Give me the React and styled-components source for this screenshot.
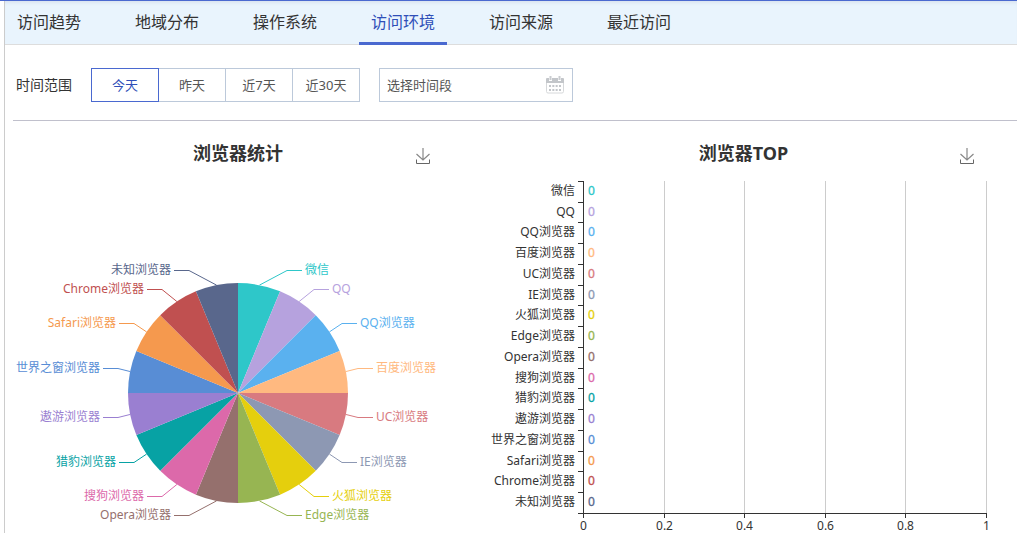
import React, { useState } from "react";
import styled, { createGlobalStyle } from "styled-components";

const GlobalStyle = createGlobalStyle`
  * {
    box-sizing: border-box;
  }
  body {
    margin: 0;
    background: #fff;
    color: #333;
    font-family: "Noto Sans", "Noto Sans CJK SC", sans-serif;
  }
  button, input {
    font-family: inherit;
  }
`;

const Page = styled.div`
  min-height: 100vh;
  padding-left: 4px;
  border-top: 1px solid #4a69d0;
  display: flex;
`;

const Content = styled.main`
  flex: 1;
  min-width: 0;
  border-left: 1px solid #ccc;
`;

const TabBar = styled.nav`
  display: flex;
  gap: 30px;
  height: 44px;
  background: #e9f4fd;
  border-bottom: 1px solid #ddd;
  box-shadow: inset 0 4px 4px -3px #d3dcea;
`;

const Tab = styled.a`
  height: 44px;
  padding: 0 12px;
  font-size: 16px;
  line-height: 42px;
  white-space: nowrap;
  text-decoration: none;
  color: ${(props) => (props.$active ? "#2f4fb8" : "#333")};
  border-bottom: 3px solid ${(props) => (props.$active ? "#4a69d0" : "transparent")};
`;

const Body = styled.div`
  padding-left: 8px;
`;

const Filters = styled.div`
  display: flex;
  align-items: center;
  height: 76px;
  padding: 4px 0 0 3px;
  border-bottom: 1px solid #c0c0cc;
`;

const FilterLabel = styled.span`
  width: 75px;
  padding-bottom: 2px;
  font-size: 14px;
`;

const RangeGroup = styled.div`
  display: flex;
  margin-right: 19px;
`;

const RangeButton = styled.button`
  position: relative;
  z-index: ${(props) => (props.$active ? 1 : 0)};
  width: 68px;
  height: 34px;
  padding: 0;
  font-size: 13px;
  background: #fff;
  color: ${(props) => (props.$active ? "#2f4fb8" : "#555")};
  border: 1px solid ${(props) => (props.$active ? "#4a69d0" : "#bcc9da")};
  cursor: pointer;

  & + & {
    margin-left: -1px;
  }
`;

const DateBox = styled.label`
  display: flex;
  align-items: center;
  width: 194px;
  height: 34px;
  padding: 0 8px 0 7px;
  border: 1px solid #bcc9da;
`;

const DateInput = styled.input`
  flex: 1;
  min-width: 0;
  padding: 0;
  border: 0;
  outline: 0;
  font-size: 13px;
  background: transparent;

  &::placeholder {
    color: #555;
    opacity: 1;
  }
`;

const Charts = styled.div`
  display: grid;
  grid-template-columns: 450fr 554fr;
`;

const Panel = styled.section`
  min-width: 0;
  padding: ${(props) => (props.$wide ? "0 7px 0 14px" : "0")};
`;

const PanelHead = styled.header`
  display: grid;
  grid-template-columns: 1fr auto 1fr;
  align-items: center;
  height: 54px;
  padding: 10px 0 0;
`;

const PanelTitle = styled.h2`
  grid-column: 2;
  margin: 0;
  font-size: 18px;
  line-height: 24px;
  font-weight: bold;
`;

const SaveButton = styled.button`
  justify-self: end;
  display: flex;
  margin: 6px ${(props) => (props.$wide ? "35px" : "32px")} 0 0;
  padding: 0;
  border: 0;
  background: none;
  cursor: pointer;
`;

const Chart = styled.svg`
  display: block;
  width: 100%;
  font-size: 12px;
`;

const tabs = ["访问趋势", "地域分布", "操作系统", "访问环境", "访问来源", "最近访问"];
const ranges = ["今天", "昨天", "近7天", "近30天"];

const browsers = [
  { name: "微信", color: "#2ec7c9" },
  { name: "QQ", color: "#b6a2de" },
  { name: "QQ浏览器", color: "#5ab1ef" },
  { name: "百度浏览器", color: "#ffb980" },
  { name: "UC浏览器", color: "#d87a80" },
  { name: "IE浏览器", color: "#8d98b3" },
  { name: "火狐浏览器", color: "#e5cf0d" },
  { name: "Edge浏览器", color: "#97b552" },
  { name: "Opera浏览器", color: "#95706d" },
  { name: "搜狗浏览器", color: "#dc69aa" },
  { name: "猎豹浏览器", color: "#07a2a4" },
  { name: "遨游浏览器", color: "#9a7fd1" },
  { name: "世界之窗浏览器", color: "#588dd5" },
  { name: "Safari浏览器", color: "#f5994e" },
  { name: "Chrome浏览器", color: "#c05050" },
  { name: "未知浏览器", color: "#59678c" },
];

// distance of each label elbow from the pie centre, one quarter of the circle
const elbows = [
  [49, 123],
  [76, 104],
  [104, 70],
  [120, 25],
];

const CX = 225;
const CY = 218;
const R = 110;

const point = (turn) => {
  const a = turn * Math.PI * 2;
  return [CX + R * Math.sin(a), CY - R * Math.cos(a)];
};

function PieChart() {
  const n = browsers.length;
  return (
    <Chart viewBox="0 0 450 358" role="img" aria-label="浏览器统计">
      {browsers.map((b, i) => {
        const [x1, y1] = point(i / n);
        const [x2, y2] = point((i + 1) / n);
        const [mx, my] = point((i + 0.5) / n);
        const quarter = Math.floor(i / 4);
        const [dx, dy] = elbows[quarter % 2 ? 3 - (i % 4) : i % 4];
        const side = i < n / 2 ? 1 : -1;
        const ex = CX + side * dx;
        const ey = (quarter === 0 || quarter === 3 ? CY - dy : CY + dy - 1) + 0.5;
        return (
          <g key={b.name} fill={b.color}>
            <path d={`M${CX} ${CY}L${x1} ${y1}A${R} ${R} 0 0 1 ${x2} ${y2}Z`} />
            <polyline
              points={`${mx},${my} ${ex},${ey} ${ex + side * 15},${ey}`}
              fill="none"
              stroke={b.color}
            />
            <text
              x={ex + side * 18}
              y={Math.round(ey + 3)}
              textAnchor={side > 0 ? "start" : "end"}
            >
              {b.name}
            </text>
          </g>
        );
      })}
    </Chart>
  );
}

const LEFT = 106;
const RIGHT = 509;
const TOP = 6;
const BOTTOM = 338;

function BarChart() {
  const step = (BOTTOM - TOP) / browsers.length;
  const ticks = [0, 0.2, 0.4, 0.6, 0.8, 1];
  const tickX = (t) => Math.round(LEFT + (RIGHT - LEFT) * t) + 0.5;
  return (
    <Chart viewBox="0 0 533 358" role="img" aria-label="浏览器TOP">
      {ticks.map((t) => (
        <g key={t}>
          {t > 0 && <path d={`M${tickX(t)} ${TOP}V${BOTTOM}`} stroke="#ccc" />}
          <path d={`M${tickX(t)} ${BOTTOM}v5`} stroke="#333" />
          <text x={tickX(t)} y={BOTTOM + 17} textAnchor="middle" fill="#333">
            {t}
          </text>
        </g>
      ))}
      {browsers.map((b, i) => {
        const y = Math.ceil(TOP + step * i - 0.5);
        const base = Math.floor(TOP + step * (i + 0.5)) + 4;
        return (
          <g key={b.name}>
            <path d={`M${LEFT - 5} ${y + 0.5}h5`} stroke="#333" />
            <text x={LEFT - 8} y={base} textAnchor="end" fill="#333">
              {b.name}
            </text>
            <text x={LEFT + 5} y={base} fill={b.color} stroke={b.color} strokeWidth="0.3">
              0
            </text>
          </g>
        );
      })}
      <path
        d={`M${LEFT + 0.5} ${TOP}V${BOTTOM}M${LEFT - 5} ${BOTTOM + 0.5}H${RIGHT + 1}`}
        stroke="#333"
      />
    </Chart>
  );
}

function SaveIcon() {
  return (
    <svg width="16" height="18" viewBox="0 0 16 18" fill="none">
      <path d="M8 1v12M1.500 7L8 13l6.500-6" stroke="#888" strokeWidth="1.200" />
      <path d="M1.500 12.500v4h13v-4" stroke="#666" />
    </svg>
  );
}

function CalendarIcon() {
  return (
    <svg width="18" height="18" viewBox="0 0 18 18">
      <path
        d="M.5 6v9.500a1.500 1.500 0 0 0 1.500 1.500h14a1.500 1.500 0 0 0 1.500-1.500V6"
        fill="#fff"
        stroke="#d6d8da"
      />
      <path d="M0 3q0-1 1-1h16q1 0 1 1v4H0z" fill="#c3c6ca" />
      <path d="M4.500 0v5M13.500 0v5" stroke="#fff" strokeWidth="3" />
      <path d="M4.500 0v4M13.500 0v4" stroke="#c9ccd0" strokeWidth="2" />
      <path
        d="M3 10h12M3 14h12"
        stroke="#c3c6ca"
        strokeWidth="2"
        strokeDasharray="2 1.330"
      />
    </svg>
  );
}

function ChartPanel({ title, wide, children }) {
  return (
    <Panel $wide={wide}>
      <PanelHead>
        <PanelTitle>{title}</PanelTitle>
        <SaveButton type="button" aria-label="保存为图片" $wide={wide}>
          <SaveIcon />
        </SaveButton>
      </PanelHead>
      {children}
    </Panel>
  );
}

export default function App() {
  const [tab, setTab] = useState("访问环境");
  const [range, setRange] = useState("今天");

  return (
    <Page>
      <GlobalStyle />
      <Content>
        <TabBar>
          {tabs.map((t) => (
            <Tab key={t} href="#" $active={t === tab} onClick={() => setTab(t)}>
              {t}
            </Tab>
          ))}
        </TabBar>
        <Body>
          <Filters>
            <FilterLabel>时间范围</FilterLabel>
            <RangeGroup>
              {ranges.map((r) => (
                <RangeButton
                  key={r}
                  type="button"
                  $active={r === range}
                  onClick={() => setRange(r)}
                >
                  {r}
                </RangeButton>
              ))}
            </RangeGroup>
            <DateBox>
              <DateInput type="text" placeholder="选择时间段" aria-label="选择时间段" />
              <CalendarIcon />
            </DateBox>
          </Filters>
          <Charts>
            <ChartPanel title="浏览器统计">
              <PieChart />
            </ChartPanel>
            <ChartPanel title="浏览器TOP" wide>
              <BarChart />
            </ChartPanel>
          </Charts>
        </Body>
      </Content>
    </Page>
  );
}
